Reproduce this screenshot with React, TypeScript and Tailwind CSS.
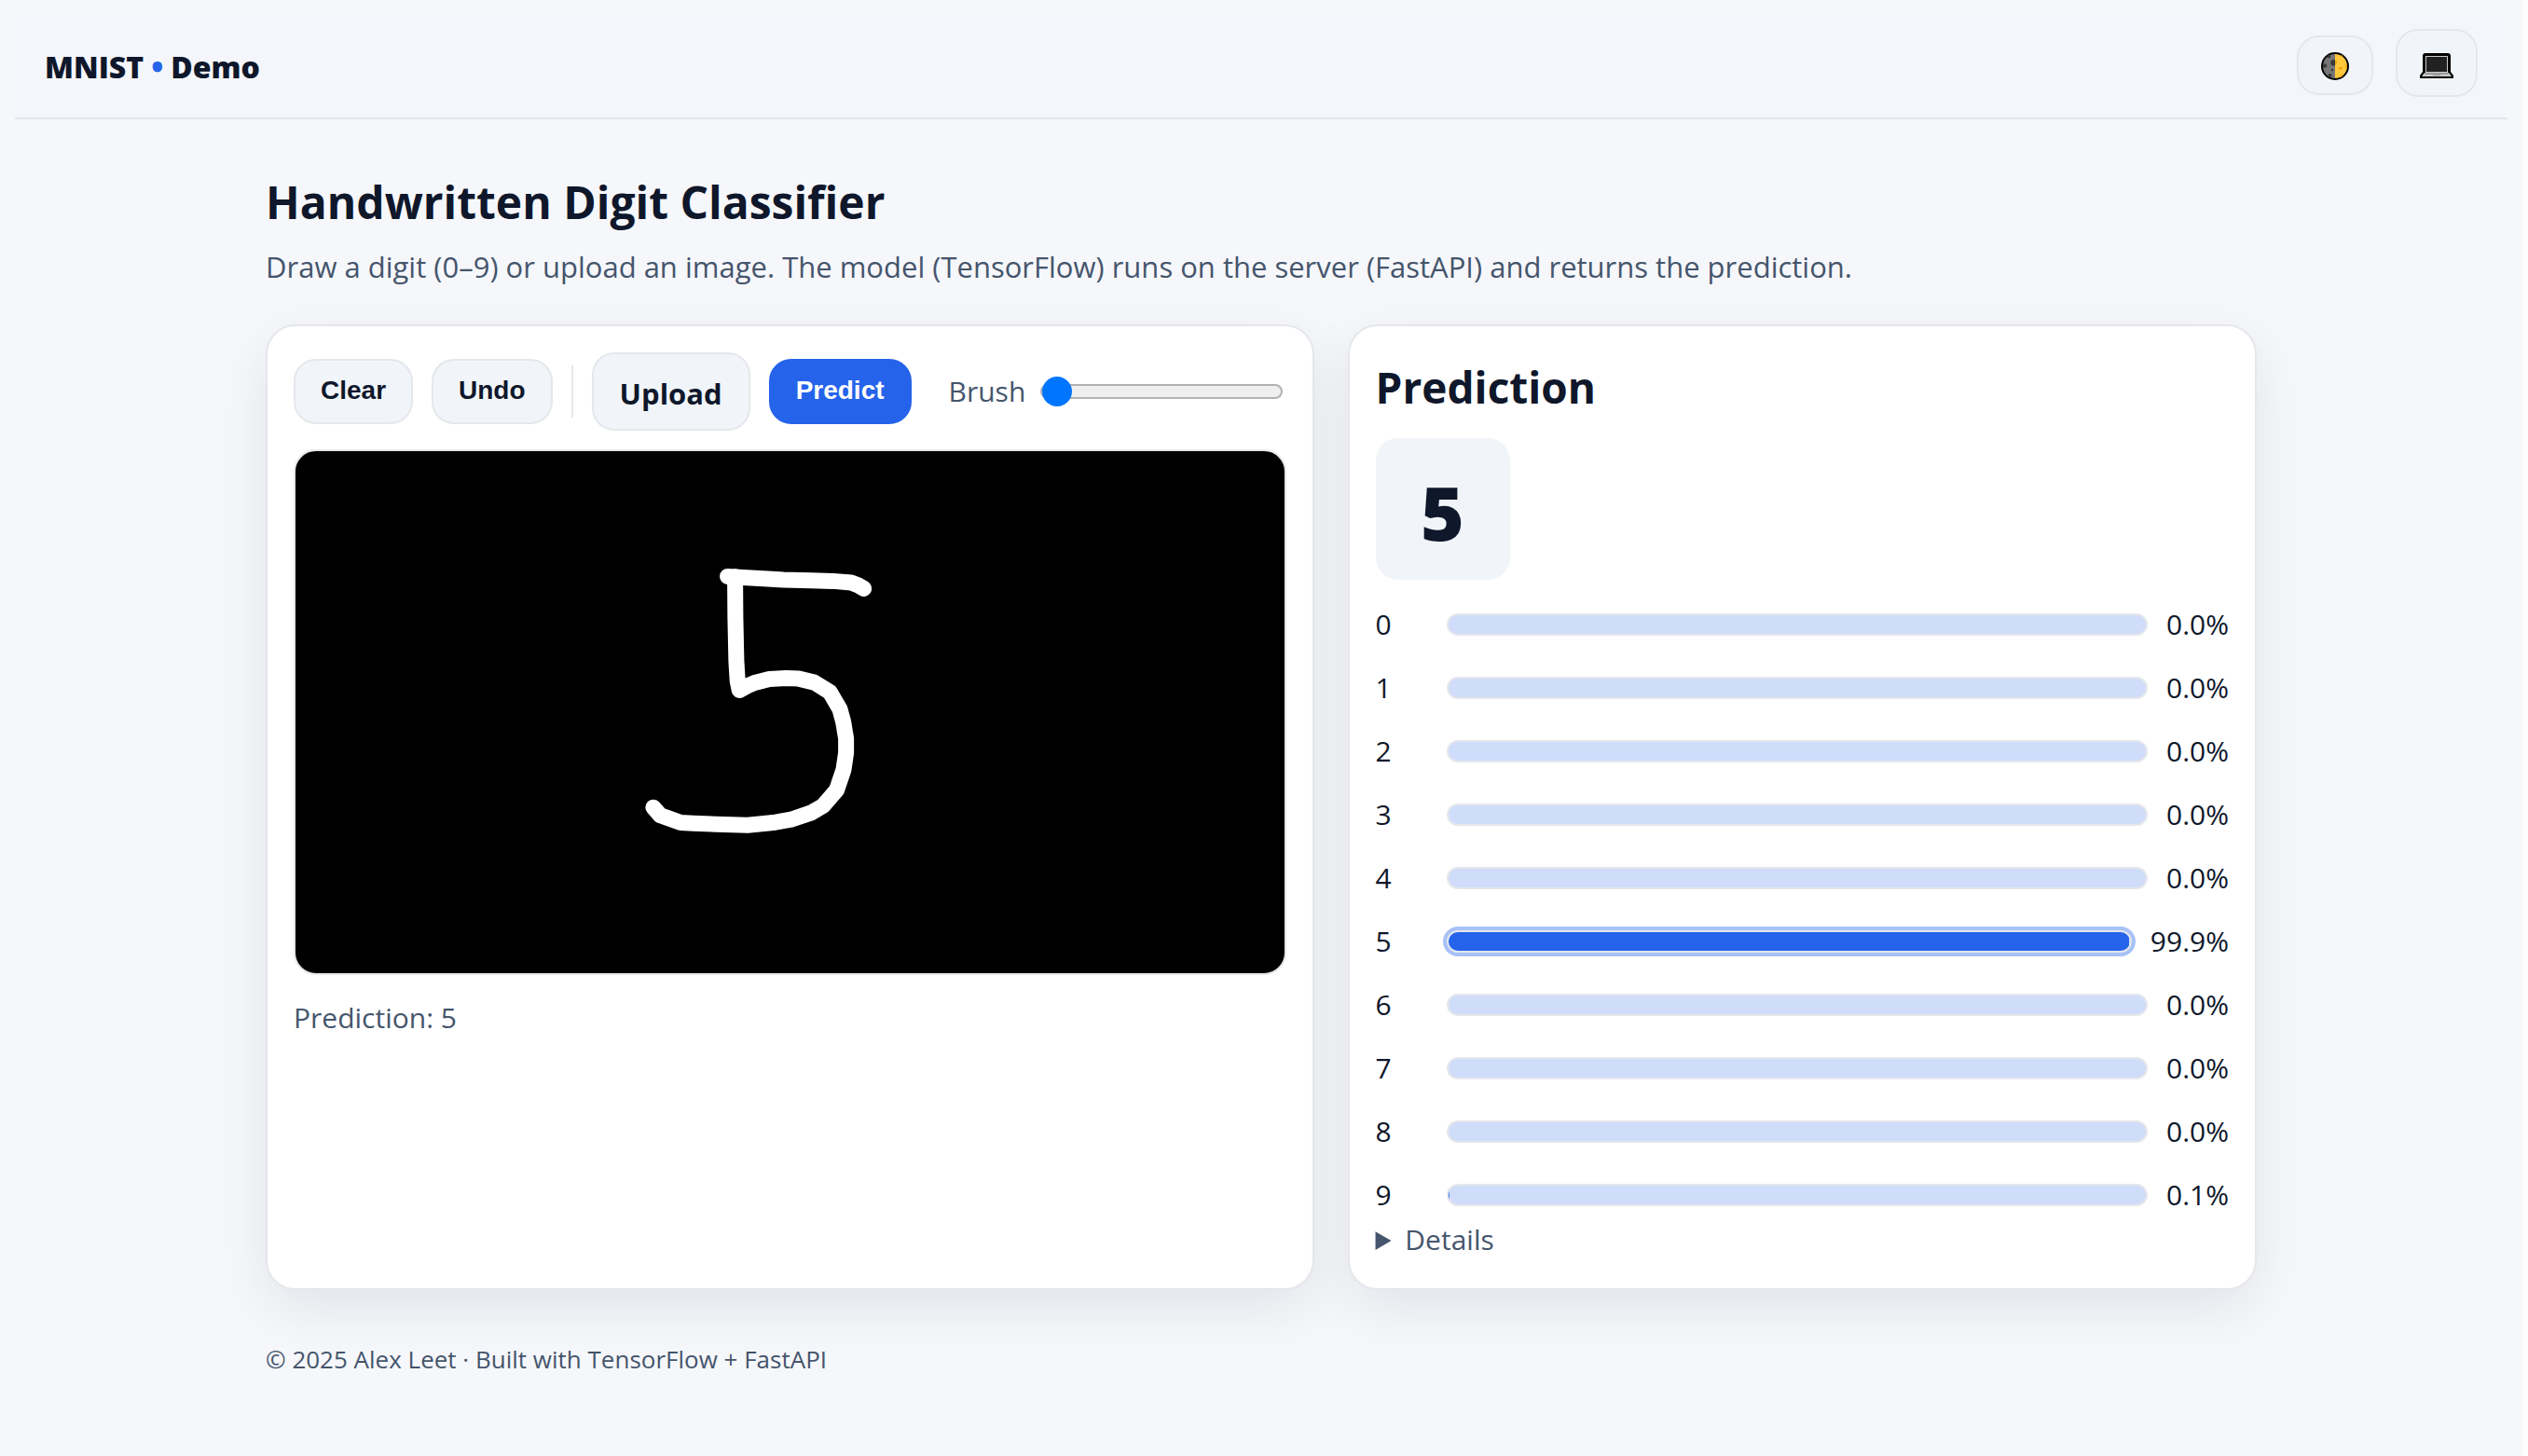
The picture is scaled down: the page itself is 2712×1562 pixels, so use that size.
import React from "react";

type Score = { digit: number; percent: number };

const SCORES: Score[] = [
  { digit: 0, percent: 0 },
  { digit: 1, percent: 0 },
  { digit: 2, percent: 0 },
  { digit: 3, percent: 0 },
  { digit: 4, percent: 0 },
  { digit: 5, percent: 99.9 },
  { digit: 6, percent: 0 },
  { digit: 7, percent: 0 },
  { digit: 8, percent: 0 },
  { digit: 9, percent: 0.1 },
];

const CARD =
  "rounded-[32px] border-2 border-gray-200 bg-white p-7 shadow-[0_20px_60px_rgba(2,6,23,0.08)]";
const BUTTON =
  "flex items-center justify-center rounded-3xl border-2 font-['Liberation_Sans',sans-serif] text-[28px] leading-8 font-bold px-[27px] pt-4 pb-[18px]";

function MoonIcon() {
  return (
    <svg viewBox="0 0 30 30" className="h-[30px] w-[30px]" aria-hidden="true">
      <circle cx="15" cy="15" r="15" fill="#000" />
      <path d="M15 2a13 13 0 0 0 0 26z" fill="#767676" />
      <path d="M15 2a13 13 0 0 1 0 26z" fill="#ffc83d" />
      <g fill="#3a3a3a">
        <path d="M15 8h-1.500a3 3 0 0 0 0 6.500H15z" />
        <circle cx="4" cy="14.500" r="2.300" />
        <circle cx="8.500" cy="4.800" r="1.800" />
        <circle cx="12" cy="19" r="1.200" />
        <circle cx="9.500" cy="25" r="2" />
      </g>
      <g fill="#f2a50c">
        <path d="M15 9h1.500c1 1.500.5 4-1.500 5z" />
        <path d="M19 16h4v2l-2 1-2-1z" />
        <path d="M26 13h2v4h-1.500z" />
        <path d="M21 24h2v2l-2 1z" />
        <path d="M21 3.500h2v2l-2-.5z" />
      </g>
    </svg>
  );
}

function LaptopIcon() {
  return (
    <svg viewBox="0 0 36 27" className="h-[27px] w-9" aria-hidden="true">
      <path d="M6 0h24q3 0 3 3v17l3 4v3H0v-3l3-4V3q0-3 3-3z" fill="#000" />
      <rect x="6" y="3" width="24" height="18" fill="#ccc" />
      <rect x="7" y="4" width="22" height="16" fill="#212121" />
      <path d="M5 21h26l3 4H2z" fill="#ccc" />
      <path d="M6 21h24l1 2H5z" fill="#9b9b9b" />
      <path d="M14 23h8v1h-8z" fill="#9b9b9b" />
    </svg>
  );
}

function Header() {
  return (
    <header className="mx-4 flex h-[114px] items-center justify-between border-b-2 border-gray-200 bg-[#f5f6fb] px-8 pb-1.5">
      <div className="pt-2.5 text-[32px] leading-10 font-extrabold">
        MNIST <span className="text-[#2563eb]">•</span> Demo
      </div>
      <div className="flex items-start gap-6">
        <button
          type="button"
          aria-label="Toggle theme"
          className="mt-[7px] flex h-16 w-[82px] items-center justify-center rounded-3xl border-2 border-gray-200 bg-slate-100 pt-0.5"
        >
          <MoonIcon />
        </button>
        <a
          href="#source"
          aria-label="Source code"
          className="flex h-[73px] w-[88px] items-center justify-center rounded-3xl border-2 border-gray-200 bg-slate-100 pt-1.5"
        >
          <LaptopIcon />
        </a>
      </div>
    </header>
  );
}

function Toolbar() {
  return (
    <div className="flex items-center gap-5">
      <button type="button" className={BUTTON + " border-gray-200 bg-slate-100"}>
        Clear
      </button>
      <button type="button" className={BUTTON + " border-gray-200 bg-slate-100"}>
        Undo
      </button>
      <div className="h-14 w-0.5 bg-gray-200" />
      <button
        type="button"
        className="flex h-[84px] items-center rounded-3xl border-2 border-gray-200 bg-slate-100 px-7 pt-1 text-[31px] leading-10 font-bold"
      >
        Upload
      </button>
      <button type="button" className={BUTTON + " border-[#2563eb] bg-[#2563eb] text-white"}>
        Predict
      </button>
      <label className="ml-5 flex flex-1 items-center gap-4 text-slate-600">
        Brush
        <input
          type="range"
          min={8}
          max={40}
          defaultValue={8}
          className="mr-1 h-8 min-w-0 flex-1 appearance-none bg-transparent [&::-webkit-slider-runnable-track]:h-4 [&::-webkit-slider-runnable-track]:rounded-full [&::-webkit-slider-runnable-track]:border-2 [&::-webkit-slider-runnable-track]:border-[#b2b2b2] [&::-webkit-slider-runnable-track]:bg-[#efefef] [&::-webkit-slider-thumb]:-mt-[10px] [&::-webkit-slider-thumb]:h-8 [&::-webkit-slider-thumb]:w-8 [&::-webkit-slider-thumb]:appearance-none [&::-webkit-slider-thumb]:rounded-full [&::-webkit-slider-thumb]:bg-[#0075ff]"
        />
      </label>
    </div>
  );
}

function DrawingPad() {
  return (
    <svg
      viewBox="0 0 3180 1680"
      role="img"
      aria-label="Drawing area"
      className="mt-5 block w-full rounded-3xl border-2 border-gray-200 bg-black"
    >
      <g
        transform="translate(969 285)"
        fill="none"
        stroke="#fff"
        strokeWidth="51"
        strokeLinecap="round"
        strokeLinejoin="round"
      >
        <path d="M859 157L842 147L818 138L760 133L690 131L600 129L550 126L470 121L421 118" />
        <path d="M445 119L446 250L449 390L453 455L459 484L485 470L508 460L555 448L610 445L650 447L700 459L750 490L782 545L793 585L802 640L802 685L794 740L772 805L728 856L690 878L625 900L575 909L485 918L385 915L310 912L270 910L205 887L182 861" />
      </g>
    </svg>
  );
}

function ScoreRow({ digit, percent }: Score) {
  const top = percent > 50;
  return (
    <li className="flex h-12 items-center gap-5">
      <span className="w-14">{digit}</span>
      <div
        className={
          top
            ? "h-6 flex-1 overflow-hidden rounded-full border-2 border-gray-200 bg-[#cfdcfa] ring-4 ring-[#a8c1f7]"
            : "h-6 flex-1 overflow-hidden rounded-full border-2 border-gray-200 bg-[#cfdcfa]"
        }
      >
        <div className="h-full bg-[#2563eb]" style={{ width: `${percent}%` }} />
      </div>
      <span>{percent.toFixed(1)}%</span>
    </li>
  );
}

export default function App() {
  return (
    <div className="flex min-h-screen bg-[#fcfcfd] font-['Open_Sans','Noto_Sans',sans-serif] text-[30px] leading-[48px] text-slate-900">
      <div className="min-w-0 flex-1 bg-[#f6f7fb] pt-3.5">
        <Header />
        <main className="mx-auto max-w-[2200px] px-8 pt-14">
          <h1 className="text-[48px] leading-[66px] font-bold">Handwritten Digit Classifier</h1>
          <p className="mt-3 text-[31px] text-slate-600">
            Draw a digit (0–9) or upload an image. The model (TensorFlow) runs on the server
            (FastAPI) and returns the prediction.
          </p>
          <div className="mt-[38px] grid grid-cols-[1124fr_975fr] gap-9">
            <section className={CARD}>
              <Toolbar />
              <DrawingPad />
              <p className="mt-[22px] text-slate-600">Prediction: 5</p>
            </section>
            <section className={CARD}>
              <h2 className="text-[46px] leading-[74px] font-bold">Prediction</h2>
              <div className="mt-[18px] flex h-[152px] w-36 items-center justify-center rounded-3xl bg-slate-100 pt-1.5 text-[80px] font-extrabold">
                5
              </div>
              <ul className="mt-6 flex flex-col gap-5">
                {SCORES.map((score) => (
                  <ScoreRow key={score.digit} {...score} />
                ))}
              </ul>
              <details className="text-slate-600">
                <summary>Details</summary>
              </details>
            </section>
          </div>
          <footer className="mt-[54px] text-[26px] leading-10 text-slate-600">
            © 2025 Alex Leet · Built with TensorFlow + FastAPI
          </footer>
        </main>
      </div>
      <div className="w-1.5" />
    </div>
  );
}
